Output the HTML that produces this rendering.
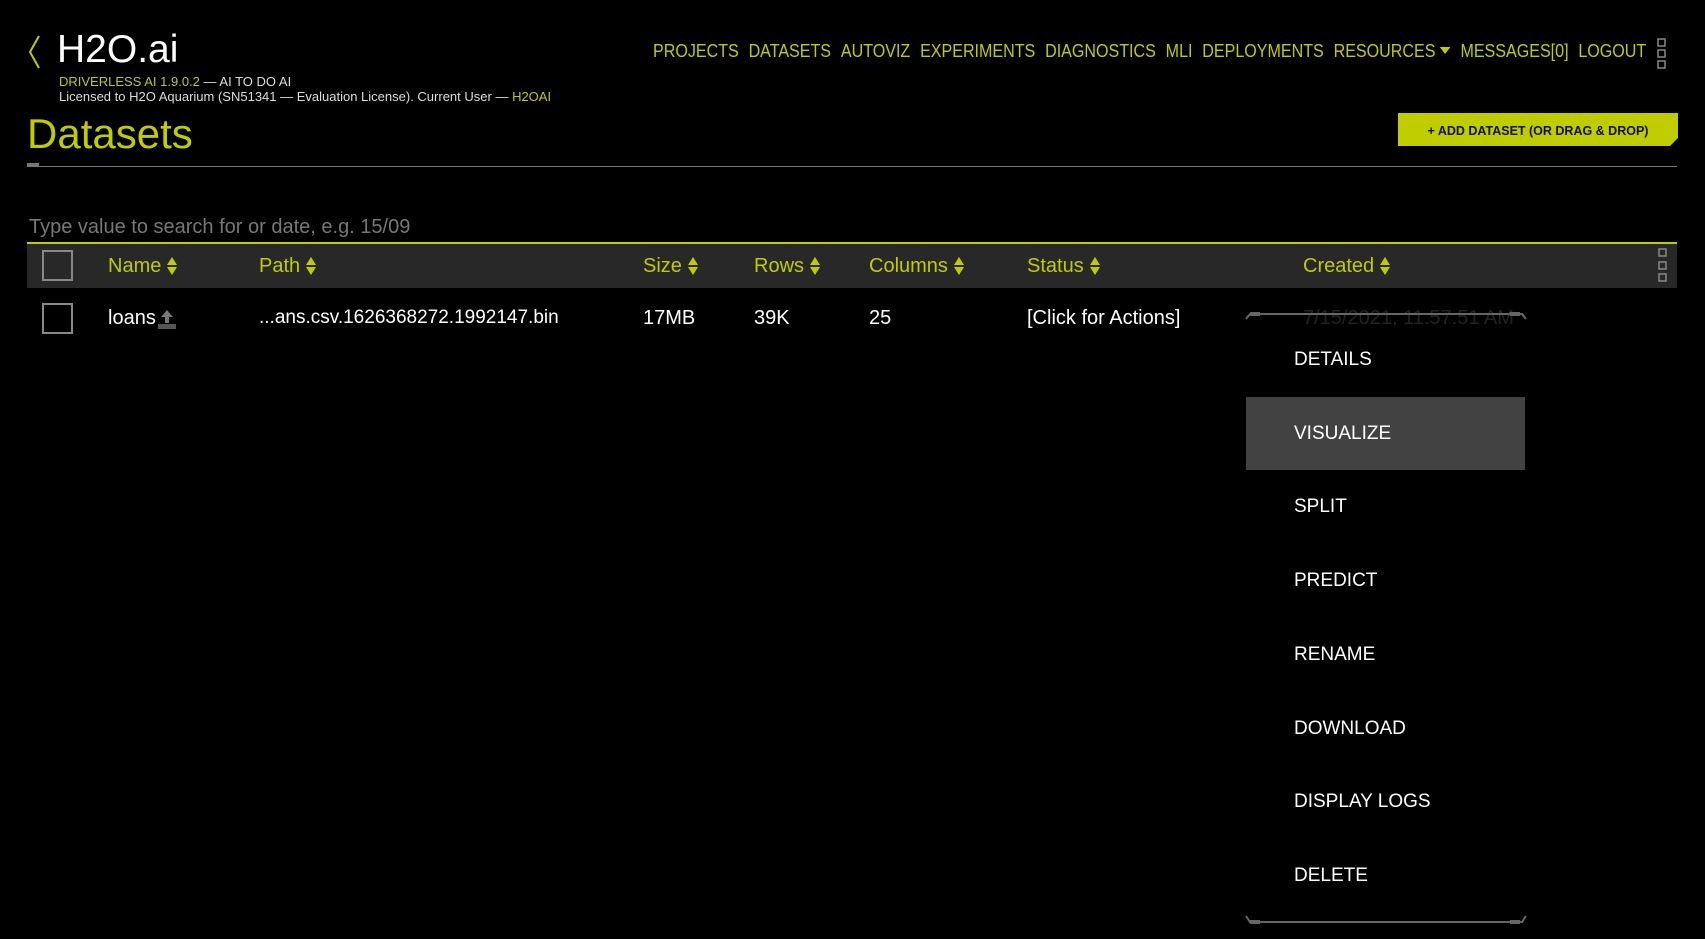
<!DOCTYPE html>
<html><head><style>
*{margin:0;padding:0;box-sizing:border-box}
body{width:1705px;height:939px;background:#000;overflow:hidden;position:relative;font-family:"Liberation Sans",sans-serif;color:#fff}
.a{position:absolute;white-space:nowrap}
.y{color:#bfcc00}
.nav{top:41px;left:653px;font-size:18px;color:#bfcc00;transform:scaleX(0.893);transform-origin:0 0}
.nav span{margin-right:11px}
.hdr{top:242px;left:27px;width:1650px;height:46px;background:#282828;border-top:2px solid #bfcc00}
.h{top:255px;font-size:20px;color:#bfcc00}
.arr{display:inline-block;width:10px;height:18px;vertical-align:-3px;margin-left:6px}
.cb{width:31px;height:31px;border:2px solid #888}
.c{top:307px;font-size:20px;color:#fff}
.mi{left:1294px;font-size:19px;color:#fff;margin-top:2px}
</style></head><body>
<svg class="a" style="left:27px;top:34px" width="14" height="36"><polyline points="12,2 3,18 12,34" fill="none" stroke="#bfcc00" stroke-width="2"/></svg>
<div class="a" style="left:57px;top:28px;font-size:39px;color:#fff">H2O.ai</div>
<div class="a" style="left:59px;top:74px;font-size:13px"><span class="y">DRIVERLESS AI 1.9.0.2</span> <span style="color:#ddd">— AI TO DO AI</span></div>
<div class="a" style="left:59px;top:89px;font-size:13px;color:#ddd">Licensed to H2O Aquarium (SN51341 — Evaluation License). Current User — <span class="y">H2OAI</span></div>
<div class="a nav"><span>PROJECTS</span><span>DATASETS</span><span>AUTOVIZ</span><span>EXPERIMENTS</span><span>DIAGNOSTICS</span><span>MLI</span><span>DEPLOYMENTS</span><span>RESOURCES <svg width="12" height="8" style="vertical-align:2px"><polygon points="0,0 12,0 6,7" fill="#bfcc00"/></svg></span><span>MESSAGES[0]</span><span>LOGOUT</span></div>
<svg class="a" style="left:1657px;top:38px" width="10" height="32" fill="none" stroke="#888" stroke-width="1.5"><rect x="1" y="1" width="7" height="7"/><rect x="1" y="12" width="7" height="7"/><rect x="1" y="23" width="7" height="7"/></svg>
<div class="a" style="left:27px;top:110px;font-size:42px;color:#bfcc00">Datasets</div>
<svg class="a" style="left:1398px;top:113px" width="280" height="33"><polygon points="0,0 280,0 280,25 272,33 0,33" fill="#bfcc00"/><text x="140" y="22" text-anchor="middle" font-family="Liberation Sans,sans-serif" font-weight="bold" font-size="12.5" fill="#111">+ ADD DATASET (OR DRAG &amp; DROP)</text></svg>
<div class="a" style="left:27px;top:166px;width:1650px;height:1px;background:#777"></div>
<div class="a" style="left:27px;top:163px;width:12px;height:4px;background:#777"></div>
<div class="a" style="left:29px;top:216px;font-size:20px;color:#777">Type value to search for or date, e.g. 15/09</div>
<div class="a hdr"></div>
<div class="a cb" style="left:42px;top:250px"></div>
<svg width="0" height="0" style="position:absolute"><defs><symbol id="ar" viewBox="0 0 10 18"><polygon points="5,0 10,8 0,8" fill="#bfcc00"/><polygon points="0,10 10,10 5,18" fill="#bfcc00"/></symbol></defs></svg>
<div class="a h" style="left:108px">Name<svg class="arr"><use href="#ar"/></svg></div>
<div class="a h" style="left:259px">Path<svg class="arr"><use href="#ar"/></svg></div>
<div class="a h" style="left:643px">Size<svg class="arr"><use href="#ar"/></svg></div>
<div class="a h" style="left:754px">Rows<svg class="arr"><use href="#ar"/></svg></div>
<div class="a h" style="left:869px">Columns<svg class="arr"><use href="#ar"/></svg></div>
<div class="a h" style="left:1027px">Status<svg class="arr"><use href="#ar"/></svg></div>
<div class="a h" style="left:1303px">Created<svg class="arr"><use href="#ar"/></svg></div>
<svg class="a" style="left:1658px;top:248px" width="10" height="36" fill="none" stroke="#888" stroke-width="1.5"><rect x="1" y="1" width="7" height="7"/><rect x="1" y="14" width="7" height="7"/><rect x="1" y="26" width="7" height="7"/></svg>
<div class="a cb" style="left:42px;top:303px"></div>
<div class="a c" style="left:108px">loans</div>
<svg class="a" style="left:158px;top:310px" width="18" height="20"><polygon points="9,0 15,7 11,7 11,13 7,13 7,7 3,7" fill="#777"/><rect x="0" y="14" width="18" height="5" fill="#555"/></svg>
<div class="a c" style="left:259px;font-size:19px">...ans.csv.1626368272.1992147.bin</div>
<div class="a c" style="left:643px">17MB</div>
<div class="a c" style="left:754px">39K</div>
<div class="a c" style="left:869px">25</div>
<div class="a c" style="left:1027px">[Click for Actions]</div>
<div class="a c" style="left:1303px;color:#222">7/15/2021, 11:57:51 AM</div>
<svg class="a" style="left:1244px;top:309px" width="284" height="12"><polyline points="2,10 6,5 278,5 282,10" fill="none" stroke="#666" stroke-width="2"/><rect x="6" y="3" width="10" height="4" fill="#666"/><rect x="266" y="3" width="10" height="4" fill="#666"/></svg>
<div class="a" style="left:1246px;top:397px;width:279px;height:73px;background:#424242"></div>
<div class="a mi" style="top:347px">DETAILS</div>
<div class="a mi" style="top:421px">VISUALIZE</div>
<div class="a mi" style="top:494px">SPLIT</div>
<div class="a mi" style="top:568px">PREDICT</div>
<div class="a mi" style="top:642px">RENAME</div>
<div class="a mi" style="top:716px">DOWNLOAD</div>
<div class="a mi" style="top:789px">DISPLAY LOGS</div>
<div class="a mi" style="top:863px">DELETE</div>
<svg class="a" style="left:1244px;top:914px" width="284" height="12"><polyline points="2,2 6,8 278,8 282,2" fill="none" stroke="#666" stroke-width="2"/><rect x="6" y="6" width="10" height="4" fill="#666"/><rect x="266" y="6" width="10" height="4" fill="#666"/></svg>
</body></html>
